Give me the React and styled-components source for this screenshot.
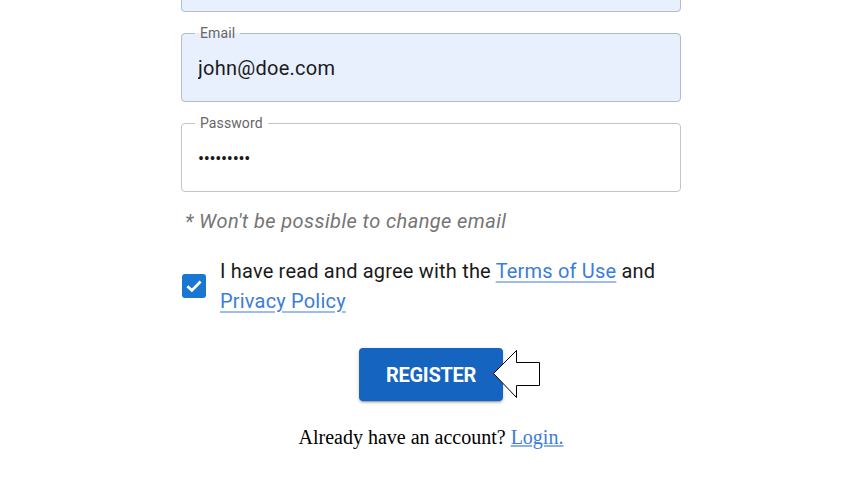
import styled, { createGlobalStyle } from "styled-components";

const GlobalStyle = createGlobalStyle`
    body {
        margin: 0;
        background: #ffffff;
        font-family: Roboto, "Liberation Sans", sans-serif;
    }
`;

const App = () => {
    return (
        <Page>
            <GlobalStyle/>
            <Form>
                <Field $filled>
                    <Legend>Name</Legend>
                    <Input type="text" defaultValue="John Doe" readOnly/>
                </Field>
                <Field $filled>
                    <Legend>Email</Legend>
                    <Input type="email" defaultValue="john@doe.com" readOnly/>
                </Field>
                <Field>
                    <Legend>Password</Legend>
                    <Input type="password" defaultValue="secret123" readOnly $secret/>
                </Field>

                <Helper>* Won't be possible to change email</Helper>

                <AgreeRow>
                    <Check>
                        <svg width="18" height="18" viewBox="0 0 18 18">
                            <path d="M2.4 9.2 L6.9 13.4 L15.6 4.6" fill="none" stroke="#fff" strokeWidth="2.8"/>
                        </svg>
                    </Check>
                    <AgreeText>
                        I have read and agree with the <TextLink href="#">Terms of Use</TextLink> and <TextLink href="#">Privacy Policy</TextLink>
                    </AgreeText>
                </AgreeRow>

                <ButtonWrap>
                    <RegisterButton type="button">Register</RegisterButton>
                    <Pointer width="48" height="49" viewBox="0 0 48 49">
                        <polygon points="0.5,23.5 23.5,0.5 23.5,12.5 46.5,12.5 46.5,35.5 23.5,35.5 23.5,47.5" fill="#fff" stroke="#000" strokeWidth="1"/>
                    </Pointer>
                </ButtonWrap>

                <Footer>
                    Already have an account? <FooterLink href="#">Login.</FooterLink>
                </Footer>
            </Form>
        </Page>
    );
}

const Page = styled.div`
    width: 100%;
    box-sizing: border-box;
    padding-left: 2px;
    display: flex;
    justify-content: center;
`;
const Form = styled.div`
    width: 500px;
    margin-top: -65px;
    display: flex;
    flex-direction: column;
`;
const Field = styled.fieldset`
    margin: 0 0 13px 0;
    padding: 15px 16px 21px 16px;
    border: 1px solid ${p => p.$filled ? "#b3bccb" : "#c4c4c4"};
    border-radius: 4px;
    background: ${p => p.$filled ? "#e8f0fe" : "#ffffff"};
    min-width: 0;
`;
const Legend = styled.legend`
    margin-left: -3px;
    padding: 0 5px;
    font-size: 14px;
    line-height: 16px;
    letter-spacing: 0.1px;
    color: #666666;
`;
const Input = styled.input`
    display: block;
    width: 100%;
    height: 24px;
    padding: 0;
    margin: 0;
    border: none;
    outline: none;
    background: transparent;
    font-family: Roboto, "Liberation Sans", sans-serif;
    font-size: ${p => p.$secret ? "18px" : "20px"};
    letter-spacing: ${p => p.$secret ? "-0.3px" : "0.25px"};
    color: #1a1a1a;
`;
const Helper = styled.p`
    margin: 1px 0 0 4px;
    font-size: 20px;
    line-height: 30px;
    font-style: italic;
    letter-spacing: 0.42px;
    color: #757575;
`;
const AgreeRow = styled.div`
    margin-top: 20px;
    display: flex;
    align-items: center;
    gap: 14px;
    padding-left: 1px;
`;
const Check = styled.span`
    flex: none;
    width: 24px;
    height: 24px;
    border-radius: 3px;
    background: #1976d2;
    display: flex;
    align-items: center;
    justify-content: center;
`;
const AgreeText = styled.p`
    margin: 0;
    font-size: 20px;
    line-height: 30px;
    letter-spacing: 0.19px;
    color: #1a1a1a;
`;
const TextLink = styled.a`
    color: #3b7dd8;
    text-decoration: underline;
    text-decoration-color: rgba(59, 125, 216, 0.5);
    text-underline-offset: 3px;
`;
const ButtonWrap = styled.div`
    position: relative;
    align-self: center;
    margin-top: 32px;
`;
const RegisterButton = styled.button`
    display: block;
    height: 53px;
    padding: 0 27px;
    border: none;
    border-radius: 4px;
    background: #1565c0;
    color: #ffffff;
    font-family: Roboto, "Liberation Sans", sans-serif;
    font-size: 20px;
    font-weight: 700;
    letter-spacing: -0.3px;
    text-transform: uppercase;
    box-shadow: 0 3px 1px -2px rgba(0,0,0,0.2), 0 2px 2px 0 rgba(0,0,0,0.14), 0 1px 5px 0 rgba(0,0,0,0.12);
    cursor: pointer;
`;
const Pointer = styled.svg`
    position: absolute;
    left: calc(100% - 10px);
    top: 2px;
`;
const Footer = styled.p`
    margin: 25px 0 0 0;
    text-align: center;
    font-family: "Liberation Serif", serif;
    font-size: 20px;
    line-height: 23px;
    color: #000000;
`;
const FooterLink = styled.a`
    color: #3b7dd8;
    text-decoration: underline;
    text-decoration-color: rgba(59, 125, 216, 0.6);
`;

export default App;
